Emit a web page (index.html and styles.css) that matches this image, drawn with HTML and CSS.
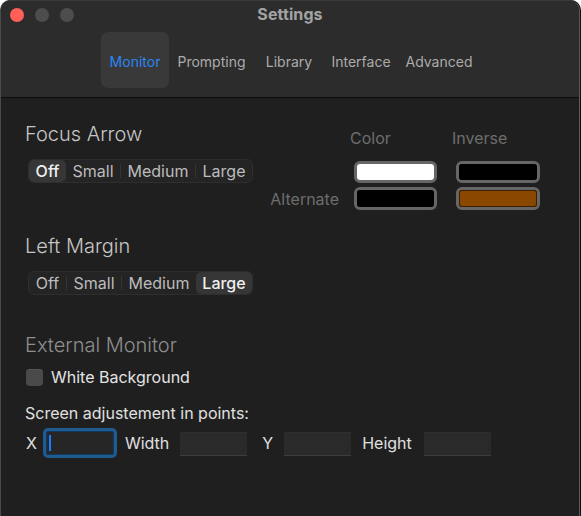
FILE: index.html
```html
<!DOCTYPE html>
<html>
<head>
<meta charset="utf-8">
<link rel="stylesheet" href="styles.css">
</head>
<body>
<div class="window">
  <div class="titlebar">
    <div class="toprow">
      <div class="lights">
        <span class="light red"></span>
        <span class="light grey"></span>
        <span class="light grey"></span>
      </div>
      <div class="title">Settings</div>
    </div>
    <div class="tabs">
      <div class="tab active t-monitor">Monitor</div>
      <div class="tab t-prompting">Prompting</div>
      <div class="tab t-library">Library</div>
      <div class="tab t-interface">Interface</div>
      <div class="tab t-advanced">Advanced</div>
    </div>
  </div>
  <div class="content">
    <div class="toprow-section">
      <div class="left-col">
        <div class="heading">Focus Arrow</div>
        <div class="segmented">
          <div class="seg sel w-off">Off</div>
          <div class="seg w-small">Small</div>
          <div class="div"></div>
          <div class="seg w-medium">Medium</div>
          <div class="div"></div>
          <div class="seg w-large">Large</div>
        </div>
      </div>
      <div class="colors">
        <div class="cl-empty"></div>
        <div class="cl-head">Color</div>
        <div class="cl-head">Inverse</div>
        <div class="cl-empty"></div>
        <div class="swatch"><div class="fill white"></div></div>
        <div class="swatch"><div class="fill black"></div></div>
        <div class="cl-label">Alternate</div>
        <div class="swatch"><div class="fill black"></div></div>
        <div class="swatch"><div class="fill orange"></div></div>
      </div>
    </div>

    <div class="heading h2">Left Margin</div>
    <div class="segmented">
      <div class="seg w-off">Off</div>
      <div class="div"></div>
      <div class="seg w-small">Small</div>
      <div class="div"></div>
      <div class="seg w-medium">Medium</div>
      <div class="seg sel w-large">Large</div>
    </div>

    <div class="heading h3 dim">External Monitor</div>
    <div class="check-row">
      <span class="checkbox"></span>
      <span class="check-label">White Background</span>
    </div>
    <div class="caption">Screen adjustement in points:</div>
    <div class="fields">
      <span class="flabel lx">X</span>
      <span class="field focused"><span class="caret"></span></span>
      <span class="flabel lw">Width</span>
      <span class="field"></span>
      <span class="flabel ly">Y</span>
      <span class="field"></span>
      <span class="flabel lh">Height</span>
      <span class="field"></span>
    </div>
  </div>
</div>
</body>
</html>
```

FILE: styles.css
```css
* { box-sizing: border-box; }
html, body { margin: 0; padding: 0; }
body {
  background: #ffffff;
  width: 581px;
  height: 516px;
  overflow: hidden;
  font-family: Inter, "Liberation Sans", sans-serif;
}
.window {
  width: 580px;
  height: 516px;
  background: #1f1f1f;
  border-radius: 10px 10px 0 0;
  border-left: 1px solid #4a4a4a;
  border-right: 1px solid #5a5a5a;
  border-top: 1px solid #3a3a3a;
  box-shadow: 1px 0 0 #111;
  overflow: hidden;
  display: flex;
  flex-direction: column;
}
.titlebar {
  height: 97px;
  background: #2c2c2c;
  border-bottom: 1px solid #0c0c0c;
  display: flex;
  flex-direction: column;
  flex: none;
}
.toprow {
  height: 30px;
  display: flex;
  align-items: center;
  position: relative;
  flex: none;
}
.lights {
  display: flex;
  gap: 11px;
  padding-left: 9px;
  margin-top: -2px;
}
.light {
  width: 14px;
  height: 14px;
  border-radius: 50%;
  display: block;
}
.light.red { background: #fe5f57; }
.light.grey { background: #4d4d4d; }
.title {
  position: absolute;
  left: 0;
  right: 0;
  top: 3px;
  text-align: center;
  font-size: 16px;
  font-weight: 700;
  color: #a3a3a3;
  letter-spacing: 0.1px;
}
.tabs {
  display: flex;
  margin-top: 1px;
  height: 56px;
  padding-left: 100px;
}
.tab {
  display: flex;
  align-items: center;
  justify-content: center;
  padding-top: 2px;
  font-size: 14px;
  color: #ababab;
  border-radius: 7px;
  white-space: nowrap;
}
.t-monitor { width: 68px; }
.t-prompting { width: 85px; }
.t-library { width: 70px; }
.t-interface { width: 74px; }
.t-advanced { width: 82px; }
.tab.active {
  background: #393939;
  color: #2a86f3;
}
.content {
  padding: 24px 0 0 24px;
  display: flex;
  flex-direction: column;
  align-items: flex-start;
}
.toprow-section {
  display: flex;
  justify-content: space-between;
  align-items: flex-start;
  width: 517px;
}
.heading {
  font-size: 20px;
  font-weight: 300;
  line-height: 24px;
  color: #c6c6c6;
}
.heading.h2 { margin-top: 24px; }
.heading.h3 { margin-top: 38px; }
.heading.dim { color: #8e8e8e; }
.segmented {
  margin-top: 13px;
  margin-left: 3px;
  height: 24px;
  display: flex;
  align-items: center;
  background: #242424;
  border: 1px solid #2e2e2e;
  border-radius: 6px;
}
.seg {
  height: 22px;
  display: flex;
  align-items: center;
  justify-content: center;
  font-size: 16px;
  color: #bcbcbc;
  border-radius: 5px;
}
.seg.sel {
  background: #363636;
  color: #efefef;
  font-weight: 500;
}
.w-off { width: 37px; }
.w-small { width: 54px; }
.w-medium { width: 74px; }
.w-large { width: 56px; }
.div {
  width: 1px;
  height: 14px;
  background: #353535;
}
.colors {
  display: grid;
  grid-template-columns: auto 83px 84px;
  grid-template-rows: 29px 22px 23px;
  column-gap: 19px;
  row-gap: 4px;
  margin-top: 6px;
  margin-right: 2px;
}
.cl-head {
  font-size: 16px;
  line-height: 20px;
  color: #6d6d6d;
  margin-left: -4px;
  align-self: start;
}
.cl-label {
  font-size: 16px;
  color: #6d6d6d;
  text-align: right;
  margin-right: -4px;
  align-self: center;
}
.swatch {
  border: 3px solid #666666;
  border-radius: 6px;
  background: #2a2a2a;
}
.fill {
  width: 100%;
  height: 100%;
  border-radius: 3px;
}
.fill.white { background: #ffffff; }
.fill.black { background: #000000; }
.fill.orange { background: #8a4700; box-shadow: inset 0 0 0 1px #3a2000; }
.check-row {
  margin-top: 9px;
  display: flex;
  align-items: center;
  height: 22px;
}
.checkbox {
  width: 17px;
  height: 17px;
  border-radius: 4px;
  background: #4a4a4a;
  box-shadow: inset 0 1px 0 #555;
  display: block;
  margin-left: 1px;
}
.check-label {
  margin-left: 8px;
  font-size: 16px;
  color: #e4e4e4;
}
.caption {
  margin-top: 15px;
  font-size: 16px;
  line-height: 20px;
  color: #e0e0e0;
}
.fields {
  margin-top: 5px;
  display: flex;
  align-items: center;
  height: 30px;
}
.flabel {
  font-size: 16px;
  color: #e0e0e0;
}
.field {
  display: block;
  width: 67px;
  height: 24px;
  background: #2a2a2a;
  border-top: 1px solid #2e2e2e;
  border-bottom: 1px solid #3d3d3d;
  margin-top: 2px;
}
.field.focused {
  width: 74px;
  height: 30px;
  margin-top: 0;
  border: 3px solid #1d5b91;
  border-radius: 5px;
  background: #262626;
  box-shadow: inset 0 0 0 1px #113a60;
  position: relative;
}
.caret {
  position: absolute;
  left: 3px;
  top: 4px;
  width: 2px;
  height: 16px;
  background: #1a7cff;
}
.lx { margin-right: 6px; margin-left: 1px; }
.lw { margin: 0 11px 0 8px; }
.ly { margin: 0 11px 0 15px; }
.lh { margin: 0 12px 0 11px; }
```
